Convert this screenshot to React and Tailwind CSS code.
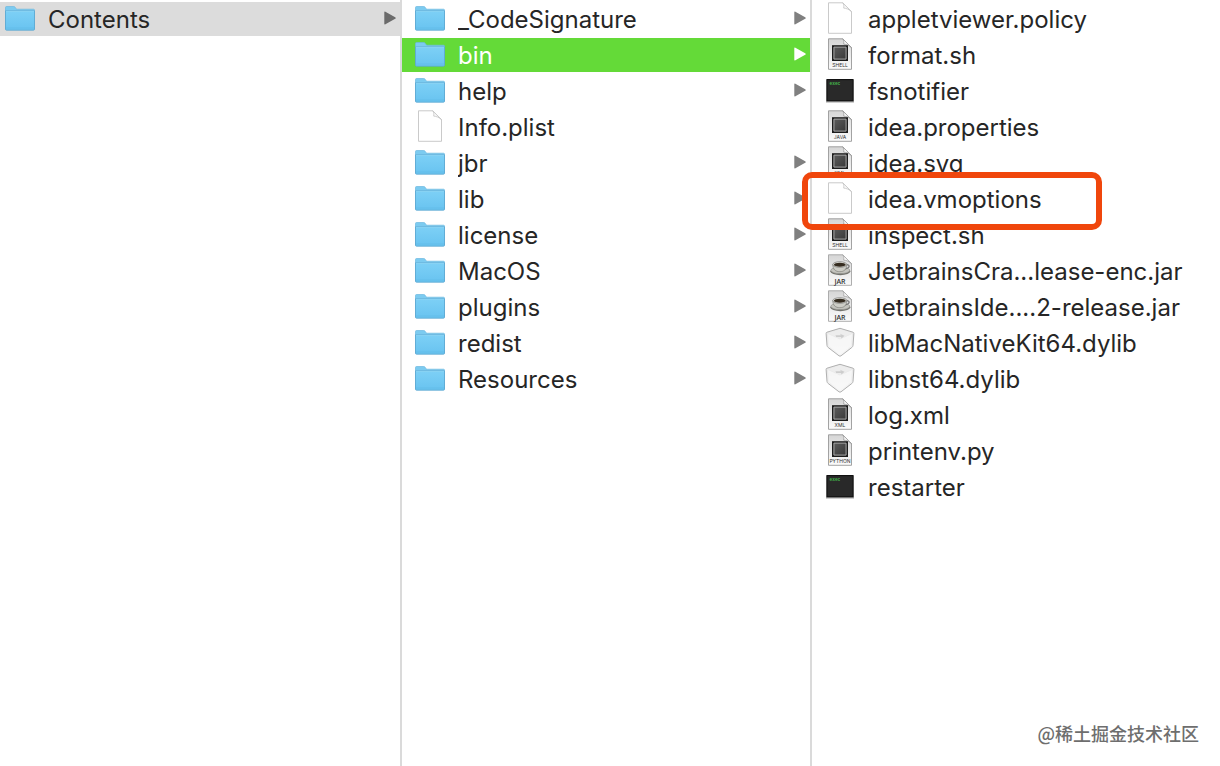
import { useState } from 'react'
import clsx from 'clsx'

const folders = [
  { name: '_CodeSignature', icon: 'folder' },
  { name: 'bin', icon: 'folder' },
  { name: 'help', icon: 'folder' },
  { name: 'Info.plist', icon: 'page' },
  { name: 'jbr', icon: 'folder' },
  { name: 'lib', icon: 'folder' },
  { name: 'license', icon: 'folder' },
  { name: 'MacOS', icon: 'folder' },
  { name: 'plugins', icon: 'folder' },
  { name: 'redist', icon: 'folder' },
  { name: 'Resources', icon: 'folder' },
]

const files = [
  { name: 'appletviewer.policy', icon: 'page' },
  { name: 'format.sh', icon: 'code', label: 'SHELL' },
  { name: 'fsnotifier', icon: 'exec' },
  { name: 'idea.properties', icon: 'code', label: 'JAVA' },
  { name: 'idea.svg', icon: 'code', label: 'XML' },
  { name: 'idea.vmoptions', icon: 'page', marked: true },
  { name: 'inspect.sh', icon: 'code', label: 'SHELL' },
  { name: 'JetbrainsCra...lease-enc.jar', icon: 'jar' },
  { name: 'JetbrainsIde....2-release.jar', icon: 'jar' },
  { name: 'libMacNativeKit64.dylib', icon: 'dylib' },
  { name: 'libnst64.dylib', icon: 'dylib' },
  { name: 'log.xml', icon: 'code', label: 'XML' },
  { name: 'printenv.py', icon: 'code', label: 'PYTHON' },
  { name: 'restarter', icon: 'exec' },
]

// Shared gradients, referenced by id from the icons
function IconDefs() {
  return (
    <svg className="absolute w-0 h-0" aria-hidden="true">
      <defs>
        <linearGradient id="folder" x1="0" y1="0" x2="0" y2="1">
          <stop offset="0" stopColor="#7dd0f6" />
          <stop offset="1" stopColor="#68c3f0" />
        </linearGradient>
        <linearGradient id="sheet" x1="0" y1="0" x2="0" y2="1">
          <stop offset="0" stopColor="#d6d6d6" />
          <stop offset="1" stopColor="#fbfbfb" />
        </linearGradient>
        <linearGradient id="chip" x1="0" y1="0" x2="1" y2="1">
          <stop offset="0" stopColor="#5c5c5c" />
          <stop offset="1" stopColor="#383838" />
        </linearGradient>
        <linearGradient id="shield" x1="0" y1="0" x2="0" y2="1">
          <stop offset="0" stopColor="#e6e6e6" />
          <stop offset="1" stopColor="#f6f6f6" />
        </linearGradient>
      </defs>
    </svg>
  )
}

function Sheet({ fill = '#fff', stroke = '#c4c4c4' }) {
  return (
    <>
      <path d="M3.5 .8h14.3l8.7 8.9v21.6h-23z" fill={fill} stroke={stroke} strokeWidth=".9" />
      <path d="M17.8 .8c1 2 1.200 3.300.9 5.300 2.500.2 5.500 1.200 7.800 3.600z" fill="#f7f7f7" stroke={stroke} strokeWidth=".8" />
    </>
  )
}

function FileIcon({ type, label }) {
  return (
    <svg viewBox="0 0 30 34" className="w-[30px] h-[34px] shrink-0" aria-hidden="true">
      {type === 'folder' && (
        <>
          <path d="M.5 27V5.500q0-1 1-1h7.300q.8 0 1.300.7l.9 1.400q.4.600 1.200.600H28.500q1 0 1 1V27z" fill="#7ccbf0" stroke="#6bb8df" strokeWidth=".7" />
          <path d="M.5 8.800h29v18.400q0 1-1 1h-27q-1 0-1-1z" fill="url(#folder)" stroke="#5aa6cf" strokeWidth=".8" />
          <path d="M1 9.300h28" stroke="#98dcf8" strokeWidth=".7" />
          <path d="M1 26h28" stroke="#5cb5e3" strokeWidth=".5" />
        </>
      )}
      {type === 'page' && <Sheet />}
      {type === 'code' && (
        <>
          <Sheet fill="url(#sheet)" stroke="#999" />
          <path d="M7 7.200h16v15.800H7z" fill="#1c1c1c" />
          <path d="M8.900 9.100h12.200v12H8.900z" fill="url(#chip)" stroke="#b5b5b5" strokeWidth=".9" />
          <text x="15" y="29.300" textAnchor="middle" fontSize="5" fontFamily="Inter, sans-serif" fill="#333">{label}</text>
        </>
      )}
      {type === 'jar' && (
        <>
          <Sheet fill="url(#sheet)" stroke="#a5a5a5" />
          <ellipse cx="15.300" cy="17.300" rx="10" ry="3.900" fill="#74746f" />
          <ellipse cx="15.300" cy="16.300" rx="9.500" ry="3.300" fill="#c4c4be" stroke="#8c8c88" strokeWidth=".5" />
          <path d="M21 10.800c4-.8 4.500 3.500-1 4" fill="none" stroke="#777" strokeWidth="1.300" />
          <path d="M7.800 10.500c0 5 2.800 7.200 7 7.200s7-2.200 7-7.200z" fill="#cdcdc6" stroke="#74746f" strokeWidth=".6" />
          <ellipse cx="14.800" cy="10.500" rx="7" ry="2.800" fill="#e4e4dd" stroke="#666" strokeWidth=".6" />
          <ellipse cx="14.800" cy="10.700" rx="5.900" ry="2" fill="#352c20" />
          <text x="15" y="29.500" textAnchor="middle" fontSize="7" fontWeight="600" fontFamily="Open Sans, sans-serif" fill="#333">JAR</text>
        </>
      )}
      {type === 'exec' && (
        <>
          <path d="M1 6h28v22.700H1z" fill="#bbb" />
          <path d="M1.400 5h27.200v22.400H1.400z" fill="#111" />
          <path d="M2.500 6.100h25v20.200h-25z" fill="#292929" />
          <text x="4.500" y="11" fontSize="4.500" fontWeight="700" fontFamily="Liberation Mono, monospace" fill="#43b649">exec</text>
        </>
      )}
      {type === 'dylib' && (
        <>
          <path d="M15 2.300 28 6.200q1 .3.900 1.300L28 19.500q-.2 1.200-1.200 2L16 29.800q-1 .7-2 0L3.200 21.500q-1-.8-1.200-2L1.100 7.500q-.1-1 .9-1.300z" fill="url(#shield)" stroke="#b0b0b0" strokeWidth="1" />
          <path d="M3 8 15 13.500 27 8l-.9 11.200q-.1.800-.8 1.300L15 28.500 4.700 20.500q-.7-.5-.8-1.300z" fill="#fafafa" opacity=".75" />
          <path d="M2.500 7.300 15 3.300l12.500 4L15 12.500z" fill="#ededed" />
          <path d="M10.500 9.200h5.500l-1-1.400 4.500 2-3 2.700-.4-1.400h-5z" fill="#cdcdcd" />
        </>
      )}
    </svg>
  )
}

function Arrow({ className }) {
  return (
    <svg viewBox="0 0 12 14" className={clsx('w-3 h-[14px] shrink-0 mb-[2px]', className)} aria-hidden="true">
      <path d="M.3 1.300Q.3.100 1.400.7l9.800 5.500q1.200.8 0 1.600l-9.800 5.500q-1.100.6-1.100-.6z" fill="currentColor" />
    </svg>
  )
}

function Row({ item, first, selected, onClick }) {
  return (
    <li className="relative">
      <button
        type="button"
        onClick={onClick}
        className={clsx(
          'flex items-center gap-[13px] w-full h-[34px] pr-1 text-left',
          first ? 'pl-[5px] bg-[#dcdcdc]' : 'pl-[13px]',
          selected ? 'bg-[#64da38] text-white' : 'text-[#262626]'
        )}
      >
        <FileIcon type={item.icon} label={item.label} />
        <span className="flex-1 truncate pt-[2px]">{item.name}</span>
        {item.icon === 'folder' && (
          <Arrow className={selected ? 'text-white' : first ? 'text-[#6b6b6b]' : 'text-[#808080]'} />
        )}
      </button>
      {item.marked && (
        <div className="absolute z-10 -left-[10px] -top-[10px] w-[300px] h-[58px] border-6 border-[#f0460c] rounded-[10px] pointer-events-none" />
      )}
    </li>
  )
}

function Column({ children, label, className }) {
  return (
    <ul aria-label={label} className={clsx('flex flex-col gap-[2px] pt-[2px] min-w-0', className)}>
      {children}
    </ul>
  )
}

export default function App() {
  const [folder, setFolder] = useState('bin')

  return (
    <main className="relative grid grid-cols-[402px_410px_1fr] min-h-screen bg-white font-['Inter',sans-serif] text-2xl">
      <IconDefs />
      <Column label="Contents" className="border-r-2 border-[#dadada]">
        <Row item={{ name: 'Contents', icon: 'folder' }} first />
      </Column>
      <Column label="Folders" className="border-r-2 border-[#dadada]">
        {folders.map(item => (
          <Row
            key={item.name}
            item={item}
            selected={item.name === folder}
            onClick={() => setFolder(item.name)}
          />
        ))}
      </Column>
      <Column label="Files">
        {files.map(item => (
          <Row key={item.name} item={item} />
        ))}
      </Column>
      <p className="absolute right-[21px] bottom-[19px] text-lg font-medium font-['Noto_Sans_CJK_SC',sans-serif] text-[#6e6e6e]">
        @稀土掘金技术社区
      </p>
    </main>
  )
}
